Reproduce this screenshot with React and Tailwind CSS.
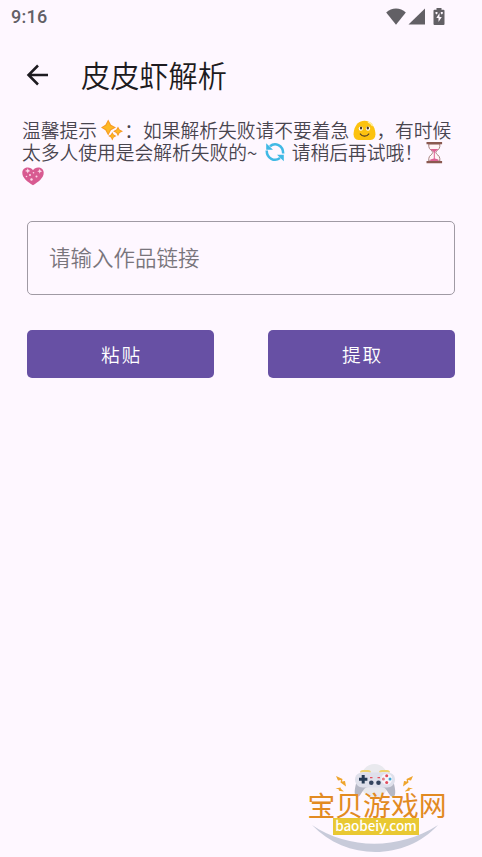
function StatusBar() {
  return (
    <div className="flex h-8 items-center justify-between pl-[11px] pr-[37px] text-[#626065]">
      <span className="pt-px font-[Roboto,sans-serif] text-[18px] font-medium leading-8 tracking-[0.3px]">9:16</span>
      <div className="flex items-center">
        <svg className="h-[17px] w-[20px]" viewBox="0 0 20 17" fill="currentColor">
          <path d="M10 16.8.2 4.500C3 2 6.300 .5 10 .5s7 1.500 9.800 4z" />
        </svg>
        <svg className="ml-0.5 h-[17px] w-[17px]" viewBox="0 0 17 17" fill="currentColor">
          <path d="M17 .5v16H.5z" />
        </svg>
        <svg className="ml-[8px] h-[17px] w-[12px]" viewBox="0 0 12 17">
          <path d="M3.500 0h5v1.800h2a1 1 0 0 1 1 1V16a1 1 0 0 1-1 1h-9a1 1 0 0 1-1-1V2.800a1 1 0 0 1 1-1h2z" fill="currentColor" />
          <path d="M6.500 5 3.300 10h2.200v4l3.300-5H6.500zM2.500 4h2v1.500l-1 1-1-1zM7.800 4h2v1.500l-1 1-1-1z" fill="#fef7ff" />
        </svg>
      </div>
    </div>
  );
}

function Sparkles() {
  return (
    <svg className="h-[22px] w-[22px] shrink-0" viewBox="0 0 22 22">
      <g fill="#f79a25">
        <path d="M7.200.5 10 5.700l5 2.800-5 2.800-2.800 5.200-2.800-5.200L0 8.500l4.400-2.800z" />
        <path d="m17 7.500 1.600 3.100 3.400 1.700-3.400 1.700-1.600 3.200-1.700-3.200-3.200-1.700 3.200-1.700z" />
        <path d="m11.300 13 1.400 2.600 2.800 1.500-2.800 1.500-1.400 2.900-1.400-2.900-2.600-1.500 2.600-1.500z" />
      </g>
      <g fill="#fdb924">
        <path d="m7.200 2.500 2 4.200 3.800 1.800-3.800 1.800-2 4.200-2-4.200-3.800-1.800 3.800-1.800z" />
        <path d="m17 9.500 1 1.800 1.900 1-1.900 1-1 1.800-1-1.800-1.900-1 1.900-1z" />
        <path d="m11.300 14.800.8 1.500 1.500.8-1.500.8-.8 1.500-.8-1.500-1.500-.8 1.500-.8z" />
      </g>
    </svg>
  );
}

function Smile() {
  return (
    <svg className="h-[22px] w-[23px] shrink-0" viewBox="0 0 23 22">
      <path d="M11.500 1.800C6 1.800 2.500 5.500 1 11.500c-1.200 6 0 9 4.500 9.500h12c4.500-.5 5.700-3.500 4.500-9.500C20.500 5.500 17 1.800 11.500 1.800z" fill="#fcc20f" />
      <path d="M15.500 3.300c1.500.5 3 1.800 3.700 3.200" stroke="#fff0a0" strokeWidth="1.500" strokeLinecap="round" fill="none" />
      <ellipse cx="7.800" cy="9.600" rx="2.100" ry="2.200" fill="#fff" />
      <ellipse cx="15" cy="9.600" rx="2.100" ry="2.200" fill="#fff" />
      <ellipse cx="8" cy="9" rx="1.200" ry="1.500" fill="#493526" />
      <ellipse cx="14.800" cy="9" rx="1.200" ry="1.500" fill="#493526" />
      <path d="M7.300 15c2 2.900 6.500 2.900 8.500 0" fill="none" stroke="#493526" strokeWidth="1.200" strokeLinecap="round" />
    </svg>
  );
}

function Refresh() {
  return (
    <svg className="h-[22px] w-[22px] shrink-0" viewBox="0 0 22 22">
      <g fill="none" stroke="#40b9e5" strokeWidth="2.500">
        <path d="M6 5.300C11 .8 19.200 4 19.200 12.500" />
        <path d="M2.700 9.500C2.700 17.500 10.500 21.200 16 17" />
      </g>
      <path d="M2.200 2.200v6.600h6.800zM19.800 20.300v-6.600H13z" fill="#40b9e5" />
    </svg>
  );
}

function Hourglass() {
  return (
    <svg className="h-[23px] w-[22px] shrink-0" viewBox="0 0 22 23">
      <path d="M5.800 3v2.500c0 3 4 4.300 4 6s-4 3-4 6V20h11v-2.500c0-3-4-4.300-4-6s4-3 4-6V3z" fill="#fff3f6" stroke="#a6817e" strokeWidth="1" />
      <path d="M7.500 8h7.600c-.6 1.300-3 2-3.300 3.500v6l3.500 1V20H7.300v-1.500l3.500-1v-6C10.500 10 8.100 9.300 7.500 8z" fill="#dc6394" />
      <path d="M3.500 1h15.600v2.300H3.500zM3.500 19.900h15.600v2.300H3.500z" fill="#8a5950" />
    </svg>
  );
}

function Heart() {
  return (
    <svg className="h-[21px] w-[23px] shrink-0" viewBox="0 0 23 21">
      <path d="M11 19.200C5.500 16 .3 12 .3 6.800c0-5.800 8-7 10.700-2.500 2.700-4.500 10.700-3.300 10.700 2.500 0 5.200-5.200 9.200-10.700 12.400z" fill="#d85a91" />
      <g fill="#fbd8e8">
        <path d="m5.700 2.200.8 1.900 1.900.8-1.900.8-.8 1.900-.7-1.900-2-.8 2-.8zM17.700 2.700l.7 1.800 1.800.8-1.800.7-.7 1.800-.7-1.800-1.800-.7 1.800-.8z" />
        <circle cx="11.500" cy="6.800" r=".8" />
        <circle cx="8" cy="9" r="1" />
        <circle cx="14.500" cy="10.500" r="1" />
        <circle cx="4.500" cy="10.500" r=".8" />
        <circle cx="9.500" cy="13.500" r="1.200" />
      </g>
    </svg>
  );
}

function Tip() {
  return (
    <div className="mt-4 ml-[22px] flex flex-col whitespace-pre text-[18.75px] leading-[22px] text-[#49454f]">
      <div className="flex h-[22px] items-center">
        <span>温馨提示 </span>
        <Sparkles />
        <span className="ml-px">：如果解析失败请不要着急 </span>
        <Smile />
        <span>，有时候</span>
      </div>
      <div className="flex h-[22px] items-center">
        <span>太多人使用是会解析失败的~ </span>
        <span className="ml-[3px] flex">
          <Refresh />
        </span>
        <span className="ml-px"> 请稍后再试哦！</span>
        <span className="flex pt-px">
          <Hourglass />
        </span>
      </div>
      <div className="flex h-6 items-center pt-0.5">
        <Heart />
      </div>
    </div>
  );
}

function ActionButton({ label }) {
  return (
    <button className="h-12 w-[187px] rounded-[5px] bg-[#6750a4] pl-0.5 text-[18.7px] tracking-[1.9px] text-white">
      {label}
    </button>
  );
}

function Gamepad() {
  return (
    <svg className="absolute left-0 top-0 h-[93px] w-[140px]" viewBox="0 0 140 93">
      <ellipse cx="67.500" cy="17" rx="14.500" ry="17" fill="#e9e9ee" />
      <path d="M5 61c37 25 87 25 126 0-33 36-92 36-126 0z" fill="#c8cbda" />
      <path d="M54 8.500q0-1.500 2-1.500h5q2 0 2 1.500M73 8.500q0-1.500 2-1.500h5q2 0 2 1.500" fill="none" stroke="#efd36c" strokeWidth="2" />
      <path d="M50 15c-1 6-3 11-2 15.500.8 3.500 4 2.500 5.500 0 3-4.500 4.500-7.500 7.500-7.500h14c3 0 4.500 3 7.500 7.500 1.500 2.500 4.700 3.500 5.500 0 1-4.500-1-9.500-2-15.500z" fill="#b5b7c5" />
      <path d="M56 8.500h24c4.500 0 8 2.500 8 7s-3.500 8-8 8H56c-4.500 0-8-3.500-8-8s3.500-7 8-7z" fill="#dfe0eb" />
      <path d="M54.700 11h3v2.700h2.700v3h-2.700v2.700h-3v-2.700H52v-3h2.700z" fill="#263b55" />
      <g fill="#34445e">
        <circle cx="64.300" cy="18.800" r="2.300" />
        <circle cx="71.500" cy="18.800" r="2.300" />
      </g>
      <circle cx="79.700" cy="15" r="5.500" fill="#f6f5fc" />
      <g fill="#e34e5d">
        <circle cx="79.700" cy="11.800" r="1.500" />
        <circle cx="79.700" cy="18.400" r="1.500" />
        <path d="M63 13h2.500v1.300H63zM70.500 13H73v1.300h-2.500z" />
      </g>
      <circle cx="76.400" cy="15" r="1.500" fill="#e58186" />
      <circle cx="83" cy="15" r="1.500" fill="#42a7d4" />
      <g fill="#efa52d">
        <path d="m29 12 6.500 3-.5 2.500 3-.5 1 5.500-5.500-4 .5-2.500-3 .5zM106 12l-6.500 3 .5 2.500-3-.5-1 5.500 5.500-4-.5-2.500 3 .5z" />
        <path d="m28.500 24.500 5-1 .5 1.500 3 2.500-5-.8-.3-1.500zM106 24.500l-5-1-.5 1.500-3 2.500 5-.8.3-1.500z" />
      </g>
    </svg>
  );
}

function SiteLogo() {
  return (
    <div className="relative mr-[35px] flex h-[93px] w-[140px] flex-col items-center pt-[26px]">
      <Gamepad />
      <span className="relative h-7 text-[27.800px] font-normal leading-7 whitespace-nowrap text-[#e28a22]">宝贝游戏网</span>
      <span className="relative ml-[-2px] flex h-[17px] w-[86px] items-center justify-center bg-[#e9c832] pb-px text-[13.500px] font-medium leading-none tracking-[-0.1px] text-white">
        baobeiy.com
      </span>
    </div>
  );
}

export default function App() {
  return (
    <div className="flex h-[857px] w-[482px] flex-col overflow-hidden bg-[#fef7ff] font-['Noto_Sans_CJK_SC',sans-serif] font-[350]">
      <StatusBar />

      <header className="flex h-[71px] items-center pl-[26px] pt-[15px]">
        <svg className="h-[22px] w-[23px]" viewBox="0 0 23 22" fill="none" stroke="#1d1b20" strokeWidth="2.500">
          <path d="M22 11H3M12 1.500 2.500 11l9.500 9.500" />
        </svg>
        <h1 className="ml-8 pb-0.5 text-[29.200px] leading-10 text-[#1d1b20]">皮皮虾解析</h1>
      </header>

      <Tip />

      <input
        className="mx-[27px] mt-[34px] h-[74px] rounded-[5px] border border-[#a09aa4] px-[21px] pb-[3px] text-[21.500px] placeholder:text-[#79757c]"
        placeholder="请输入作品链接"
      />

      <div className="mx-[27px] mt-[35px] flex justify-between">
        <ActionButton label="粘贴" />
        <ActionButton label="提取" />
      </div>

      <footer className="mt-auto flex justify-end">
        <SiteLogo />
      </footer>
    </div>
  );
}
